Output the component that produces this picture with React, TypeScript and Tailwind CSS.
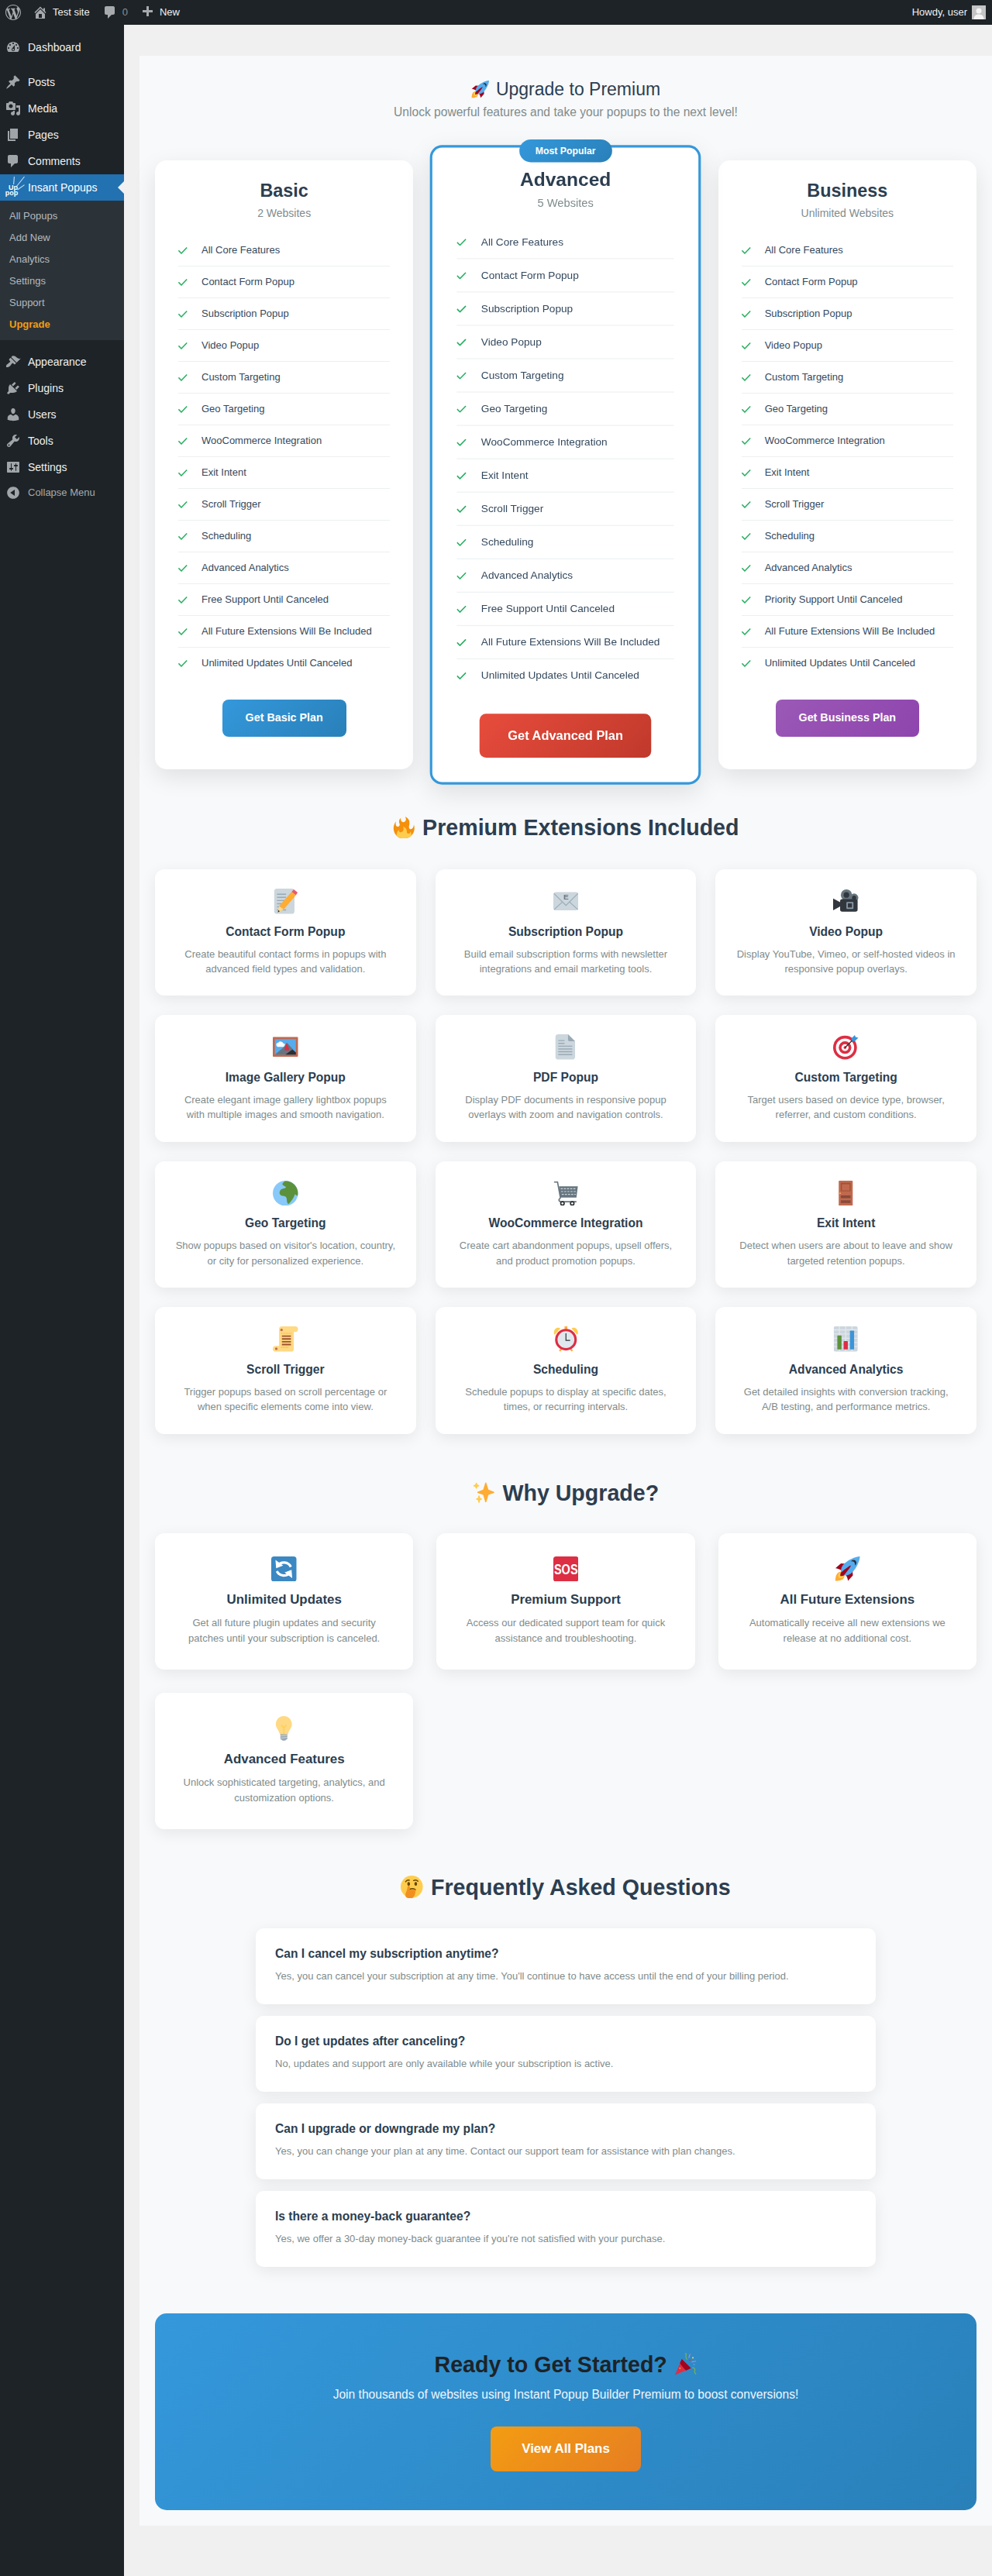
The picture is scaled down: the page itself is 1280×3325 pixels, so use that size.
import React from 'react';

type IconProps = { className?: string };

const Dash = ({ d, className }: { d: string; className?: string }) => (
  <svg viewBox="0 0 20 20" className={className} fill="currentColor">
    <path fillRule="evenodd" d={d} />
  </svg>
);

const wpLogo = 'M20 10c0-5.51-4.49-10-10-10C4.48 0 0 4.49 0 10c0 5.52 4.48 10 10 10 5.51 0 10-4.48 10-10zM7.78 15.37L4.37 6.22c.55-.02 1.17-.08 1.17-.08.5-.06.44-1.13-.06-1.11 0 0-1.45.11-2.37.11-.18 0-.37 0-.58-.01C4.12 2.69 6.87 1.11 10 1.11c2.33 0 4.45.87 6.05 2.34-.68-.11-1.65.39-1.65 1.58 0 .74.45 1.36.9 2.1.35.61.55 1.36.55 2.46 0 1.49-1.4 5-1.4 5l-3.03-8.37c.54-.02.82-.17.82-.17.5-.05.44-1.25-.06-1.22 0 0-1.44.12-2.38.12-.87 0-2.33-.12-2.33-.12-.5-.03-.56 1.2-.06 1.22l.92.08 1.26 3.41zM17.41 10c.24-.64.74-1.87.43-4.25.7 1.29 1.05 2.71 1.05 4.25 0 3.29-1.73 6.24-4.4 7.78.97-2.59 1.94-5.2 2.92-7.78zM6.1 18.09C3.12 16.65 1.11 13.53 1.11 10c0-1.3.23-2.48.72-3.59C3.25 10.3 4.67 14.2 6.1 18.09zm4.03-6.63l2.58 6.98c-.86.29-1.76.45-2.71.45-.79 0-1.57-.11-2.29-.33.81-2.38 1.62-4.74 2.42-7.1z';
const homeIcon = 'M16 8.5l1.53 1.53-1.06 1.06L10 4.62l-6.47 6.47-1.06-1.06L10 2.5l4 4v-2h2v4zm-6-2.46l6 5.99V18H4v-5.97zM12 17v-5H8v5h4z';
const commentIcon = 'M5 2h9c1.1 0 2 .9 2 2v7c0 1.1-.9 2-2 2h-2l-5 5v-5H5c-1.1 0-2-.9-2-2V4c0-1.1.9-2 2-2z';
const plusIcon = 'M17 7v3h-5v5H9v-5H4V7h5V2h3v5h5z';

const menuTop = [
  { label: 'Dashboard', d: 'M3.76 16h12.48c1.1-1.37 1.76-3.11 1.76-5 0-4.42-3.58-8-8-8s-8 3.58-8 8c0 1.89.66 3.63 1.76 5zM10 4c.55 0 1 .45 1 1s-.45 1-1 1-1-.45-1-1 .45-1 1-1zM6 6c.55 0 1 .45 1 1s-.45 1-1 1-1-.45-1-1 .45-1 1-1zm8 0c.55 0 1 .45 1 1s-.45 1-1 1-1-.45-1-1 .45-1 1-1zm-5.37 5.55L12 7v6c0 1.1-.9 2-2 2s-2-.9-2-2c0-.57.24-1.08.63-1.45zM4 10c.55 0 1 .45 1 1s-.45 1-1 1-1-.45-1-1 .45-1 1-1zm12 0c.55 0 1 .45 1 1s-.45 1-1 1-1-.45-1-1 .45-1 1-1zm-5 3c0-.55-.45-1-1-1s-1 .45-1 1 .45 1 1 1 1-.45 1-1z' },
];
const menuMid = [
  { label: 'Posts', d: 'M10.44 3.02l1.82-1.82 6.36 6.35-1.83 1.82c-1.05-.68-2.48-.57-3.41.36l-.75.75c-.92.93-1.04 2.35-.35 3.41l-1.83 1.82-2.41-2.41-2.8 2.79c-.42.42-3.38 2.71-3.8 2.29s1.86-3.39 2.28-3.81l2.79-2.79L4.1 9.36l1.83-1.82c1.05.69 2.48.57 3.4-.36l.75-.75c.93-.92 1.05-2.35.36-3.41z' },
  { label: 'Media', d: 'M13 11V4c0-.55-.45-1-1-1h-1.67L9 1H5L3.67 3H2c-.55 0-1 .45-1 1v7c0 .55.45 1 1 1h10c.55 0 1-.45 1-1zM7 4.5c1.38 0 2.5 1.12 2.5 2.5S8.38 9.5 7 9.5 4.5 8.38 4.5 7 5.62 4.5 7 4.5zM14 6h5v10.5c0 1.38-1.12 2.5-2.5 2.5S14 17.88 14 16.5s1.12-2.5 2.5-2.5c.17 0 .34.02.5.05V9h-3V6zm-4 8.05V13h2v3.5c0 1.38-1.12 2.5-2.5 2.5S7 17.88 7 16.5 8.12 14 9.5 14c.17 0 .34.02.5.05z' },
  { label: 'Pages', d: 'M6 15V2h10v13H6zm-1 1h8v2H3V5h2v11z' },
  { label: 'Comments', d: commentIcon },
];
const menuBottom = [
  { label: 'Appearance', d: 'M14.48 11.06L7.41 3.99l1.5-1.5c.5-.56 2.3-.47 3.51.32 1.21.8 1.43 1.28 2.91 2.1 1.18.64 2.45 1.26 4.45.85zm-.71.71L6.7 4.7 4.93 6.47c-.39.39-.39 1.02 0 1.41l1.06 1.06c.39.39.39 1.03 0 1.42-.6.6-1.43 1.11-2.21 1.69-.35.26-.7.53-1.01.84C1.43 13.23.5 15.38 1.1 16.9c1.52.6 3.67-.33 5.01-1.67.31-.31.58-.66.84-1.01.58-.78 1.09-1.61 1.69-2.21.39-.39 1.02-.39 1.41 0l1.06 1.06c.39.39 1.03.39 1.42 0z' },
  { label: 'Plugins', d: 'M13.11 4.36L9.87 7.6 8 5.73l3.24-3.24c.35-.34 1.05-.2 1.56.32.52.51.66 1.21.31 1.55zm-8 1.77l.91-1.12 9.01 9.01-1.19.84c-.71.71-2.63 1.16-3.82 1.16H6.14L4.9 17.26c-.59.59-1.54.59-2.12 0-.59-.58-.59-1.53 0-2.12l1.24-1.24v-3.88c0-1.13.4-3.19 1.09-3.89zm7.26 3.97l3.24-3.24c.34-.35 1.04-.21 1.55.31.52.51.66 1.21.31 1.55l-3.24 3.25z' },
  { label: 'Users', d: 'M10 9.25c-2.27 0-2.73-3.44-2.73-3.44C7 4.02 7.82 2 9.97 2c2.16 0 2.98 2.02 2.71 3.81 0 0-.41 3.44-2.68 3.44zm0 2.57L12.72 10c2.39 0 4.52 2.33 4.52 4.53v2.49s-3.65 1.13-7.24 1.13c-3.65 0-7.24-1.13-7.24-1.13v-2.49c0-2.25 1.94-4.48 4.47-4.48z' },
  { label: 'Tools', d: 'M16.68 9.77c-1.34 1.34-3.3 1.67-4.95.99l-5.41 6.52c-.99.99-2.59.99-3.58 0s-.99-2.59 0-3.57l6.52-5.42c-.68-1.65-.35-3.61.99-4.95 1.28-1.28 3.12-1.62 4.72-1.06l-2.89 2.89 2.82 2.82 2.86-2.87c.53 1.58.18 3.39-1.08 4.65zM3.81 16.21c.4.39 1.04.39 1.43 0 .4-.4.4-1.04 0-1.43-.39-.4-1.03-.4-1.43 0-.39.39-.39 1.03 0 1.43z' },
  { label: 'Settings', d: 'M18 16V4c0-.55-.45-1-1-1H3c-.55 0-1 .45-1 1v12c0 .55.45 1 1 1h14c.55 0 1-.45 1-1zM8 11h1c.55 0 1 .45 1 1s-.45 1-1 1H8v1.5c0 .28-.22.5-.5.5s-.5-.22-.5-.5V13H6c-.55 0-1-.45-1-1s.45-1 1-1h1V5.5c0-.28.22-.5.5-.5s.5.22.5.5V11zm5-2h-1c-.55 0-1-.45-1-1s.45-1 1-1h1V5.5c0-.28.22-.5.5-.5s.5.22.5.5V7h1c.55 0 1 .45 1 1s-.45 1-1 1h-1v5.5c0 .28-.22.5-.5.5s-.5-.22-.5-.5V9z' },
];
const collapseIcon = 'M10 2.16c4.33 0 7.84 3.51 7.84 7.84s-3.51 7.84-7.84 7.84S2.16 14.33 2.16 10 5.71 2.16 10 2.16zm2 11.72V6.12L6.18 9.97z';

// emoji, drawn on a 36 unit box
const Svg36 = ({ className, children }: IconProps & { children: React.ReactNode }) => (
  <svg viewBox="0 0 36 36" className={className}>{children}</svg>
);

const Rocket = ({ className }: IconProps) => (
  <Svg36 className={className}>
    <path fill="#A0041E" d="M1 17l8-7 16 1 1 16-7 8s.001-5.999-6-12-12-6-12-6z" />
    <path fill="#FFAC33" d="M.973 35s-.036-7.979 2.985-11S15 21.187 15 21.187 14.999 29 11.999 32c-3 3-11.026 3-11.026 3z" />
    <circle fill="#FFCC4D" cx="8.999" cy="27" r="4" />
    <path fill="#55ACEE" d="M35.999 0s-10 0-22 10c-6 5-6 14-4 16s11 2 16-4c10-12 10-22 10-22z" />
    <path fill="#292F33" d="M26.999 5c-1.623 0-3.013.971-3.641 2.36.502-.227 1.055-.36 1.641-.36 2.209 0 4 1.791 4 4 0 .586-.133 1.139-.359 1.64 1.389-.627 2.359-2.017 2.359-3.64 0-2.209-1.791-4-4-4z" />
    <path fill="#A0041E" d="M8 28s0-4 1-5 13.001-10.999 14-10-9.001 13-10.001 14S8 28 8 28z" />
  </Svg36>
);
const Fire = ({ className }: IconProps) => (
  <Svg36 className={className}>
    <path fill="#F4900C" d="M35 19c0-2.062-.367-4.039-1.04-5.868-.46 5.389-3.333 8.157-6.335 6.868-2.812-1.208-.917-5.917-.777-8.164.236-3.809-.012-8.169-6.931-11.794 2.875 5.5.333 8.917-2.333 9.125-2.958.231-5.667-2.542-4.667-7.042-3.238 2.386-3.332 6.402-2.333 9 1.042 2.708-.042 4.958-2.583 5.208-2.84.28-4.418-3.041-2.963-8.333C2.52 10.965 1 14.805 1 19c0 9.389 7.611 17 17 17s17-7.611 17-17z" />
    <path fill="#FFCC4D" d="M28.394 23.999c.148 3.084-2.561 4.293-4.019 3.709-2.106-.843-1.541-2.291-2.083-5.291s-2.625-5.083-5.708-6c2.25 6.333-1.247 8.667-3.08 9.084-1.872.426-3.753-.001-3.968-4.007C7.352 23.668 6 26.676 6 30c0 .368.023.73.06 1.088C9.11 33.809 13.62 36 18 36s8.89-2.191 11.94-4.912c.037-.358.06-.72.06-1.088 0-2.125-.6-4.143-1.606-6.001z" />
  </Svg36>
);
const Sparkles = ({ className }: IconProps) => (
  <Svg36 className={className}>
    <path fill="#FFAC33" d="M34.347 16.893l-8.899-3.294-3.323-10.891c-.128-.42-.517-.708-.956-.708-.439 0-.828.288-.956.708l-3.322 10.891-8.9 3.294c-.393.146-.653.519-.653.938 0 .418.26.793.653.938l8.895 3.293 3.324 11.223c.126.424.516.715.959.715.442 0 .833-.291.959-.716l3.324-11.223 8.896-3.293c.391-.144.652-.518.652-.937 0-.418-.261-.792-.653-.938z" />
    <path fill="#FFCC4D" d="M14.347 27.894l-2.314-.856-.9-3.3c-.118-.436-.513-.738-.964-.738-.451 0-.846.302-.965.737l-.9 3.3-2.313.856c-.393.145-.653.52-.653.938 0 .418.26.793.653.938l2.301.853.907 3.622c.112.444.511.756.97.756.459 0 .858-.312.97-.757l.907-3.622 2.301-.853c.393-.144.653-.519.653-.937 0-.418-.26-.793-.653-.938zM10.009 6.231l-2.364-.875-.876-2.365c-.145-.393-.519-.653-.938-.653-.418 0-.792.26-.938.653l-.875 2.365-2.365.875c-.393.146-.653.52-.653.938 0 .418.26.793.653.938l2.365.875.875 2.365c.146.393.52.653.938.653.418 0 .793-.26.938-.653l.875-2.365 2.365-.875c.393-.146.653-.52.653-.938 0-.418-.26-.793-.653-.938z" />
  </Svg36>
);
const Thinking = ({ className }: IconProps) => (
  <Svg36 className={className}>
    <circle fill="#FFCC4D" cx="18" cy="18" r="18" />
    <path fill="none" stroke="#664500" strokeWidth="1.8" strokeLinecap="round" d="M8 10c1.5-2.5 4-3.2 6-2.4M21 8c3-1.3 5.5-.6 7 1" />
    <ellipse fill="#664500" cx="13" cy="13.5" rx="2.2" ry="3" />
    <ellipse fill="#664500" cx="24.5" cy="13.5" rx="2.2" ry="3" />
    <path fill="none" stroke="#664500" strokeWidth="1.8" strokeLinecap="round" d="M14 22.5c3-1.6 7-1.6 10 .3" />
    <path fill="#F19020" d="M11 36c-2.6-.3-3.8-3-3.2-6.2.6-3 2.6-6 3-9.8.2-1.8.8-3.5 2.2-3.5 1.6 0 2 1.6 1.9 3.3l-.2 3.2 7.5-.6c1.6 0 2.2 1 2.2 2s-.5 1.5-1.3 1.8c.8.5 1 1.2.9 2-.1.8-.6 1.4-1.3 1.6.4.6.5 1.2.3 1.9-.3.8-.9 1.2-1.6 1.3.1 1.4-.9 2.9-3 3.4-2.4.6-4.6.8-7.4.6z" />
  </Svg36>
);
const Memo = ({ className }: IconProps) => (
  <Svg36 className={className}>
    <path fill="#CCD6DD" d="M31 32a4 4 0 0 1-4 4H6a4 4 0 0 1-4-4V4a4 4 0 0 1 4-4h21a4 4 0 0 1 4 4z" />
    <path fill="none" stroke="#99AAB5" strokeWidth="1.6" d="M6 8h13M6 12.5h13M6 17h13M6 21.5h8M6 26h6M6 30.5h13" />
    <path fill="#FFAC33" d="M27 4.5l6 5L15.5 30l-6.5-5z" />
    <path fill="#EA596E" d="M27 4.5L30 1l5.5 4.5-2.5 4z" />
    <path fill="#FFD983" d="M9 25l6.5 5L7 34z" />
    <path fill="#292F33" d="M8 30.7l2 1.7L7 34z" />
  </Svg36>
);
const Email = ({ className }: IconProps) => (
  <Svg36 className={className}>
    <path fill="#CCD6DD" d="M36 27a4 4 0 0 1-4 4H4a4 4 0 0 1-4-4V9a4 4 0 0 1 4-4h28a4 4 0 0 1 4 4z" />
    <path fill="none" stroke="#99AAB5" strokeWidth="1.2" d="M1 7l17 17L35 7M1 30l12-11M35 30L23 19" />
    <text x="18" y="16" textAnchor="middle" fontSize="11" fontWeight="700" fill="#66757F" fontFamily="Liberation Sans, sans-serif">E</text>
  </Svg36>
);
const Camera = ({ className }: IconProps) => (
  <Svg36 className={className}>
    <circle fill="#66757F" cx="19" cy="9" r="8" />
    <circle fill="#31373D" cx="19" cy="9" r="4" />
    <circle fill="#66757F" cx="30" cy="13" r="6" />
    <circle fill="#31373D" cx="30" cy="13" r="3" />
    <rect fill="#31373D" x="10" y="15" width="25" height="18" rx="3" />
    <path fill="#31373D" d="M11 20L0 14v17l11-6z" />
    <rect fill="#8899A6" x="19" y="19" width="10" height="10" rx="1" />
    <rect fill="#31373D" x="21" y="21" width="6" height="6" />
  </Svg36>
);
const Picture = ({ className }: IconProps) => (
  <Svg36 className={className}>
    <rect fill="#C1694F" x="0" y="4" width="36" height="28" rx="1" />
    <rect fill="#55ACEE" x="3" y="7" width="30" height="22" />
    <path fill="#FFF" d="M5 15a3 3 0 0 1 3-3 4 4 0 0 1 7 1 2.5 2.5 0 0 1 0 5H7a3 3 0 0 1-2-3z" />
    <path fill="#66757F" d="M3 29l12-10 5-7 13 14v3z" />
    <path fill="#DD2E44" d="M17 20l3-7 3 7v3h-6z" />
    <path fill="#292F33" d="M18 29l10-7 5 4v3z" />
  </Svg36>
);
const PageDoc = ({ className }: IconProps) => (
  <Svg36 className={className}>
    <path fill="#CCD6DD" d="M7 0h14l10 10v22a4 4 0 0 1-4 4H7a4 4 0 0 1-4-4V4a4 4 0 0 1 4-4z" />
    <path fill="#99AAB5" d="M21 0l10 10h-8a2 2 0 0 1-2-2z" />
    <path fill="none" stroke="#99AAB5" strokeWidth="1.6" d="M7 9h9M7 13h9M7 17h20M7 21h20M7 25h20M7 29h20" />
  </Svg36>
);
const Target = ({ className }: IconProps) => (
  <Svg36 className={className}>
    <circle fill="#DD2E44" cx="17" cy="19" r="17" />
    <circle fill="#FFF" cx="17" cy="19" r="13" />
    <circle fill="#DD2E44" cx="17" cy="19" r="9" />
    <circle fill="#FFF" cx="17" cy="19" r="5" />
    <circle fill="#DD2E44" cx="17" cy="19" r="2" />
    <path stroke="#292F33" strokeWidth="1.5" d="M17 19L30 6" />
    <path fill="#3B94D9" d="M26 6l5-5 1 3 4 1-5 5-4-.5z" />
  </Svg36>
);
const Globe = ({ className }: IconProps) => (
  <Svg36 className={className}>
    <circle fill="#88C9F9" cx="18" cy="18" r="18" />
    <path fill="#5C913B" d="M18 .5C25 0 31 4 34 10c2 4 2.3 8 1.5 12l-4-2.5c-1 4.5-5 10-8.500 13.500-2 .5-3-3-3-6 0-4-2-5-6-5.500-4-.5-5.500-4-3.500-7.500 2-3 6-2 8.500-4.500-1-2-4.500-2-5.500-4.500 1-2 2-3.500 4-4.500z" />
  </Svg36>
);
const Cart = ({ className }: IconProps) => (
  <Svg36 className={className}>
    <path fill="none" stroke="#66757F" strokeWidth="1.8" d="M1 2h5l4 22c.3 1.5-2 2-2 3.500S9 30 11 30h22" />
    <path fill="#66757F" d="M8 8h27l-2 16H10z" />
    <path fill="none" stroke="#CCD6DD" strokeWidth="1.2" strokeDasharray="3 1.5" d="M10.5 11.5h22M11 15.5h21M12 19.5h20" />
    <circle fill="none" stroke="#292F33" strokeWidth="1.8" cx="13" cy="32.5" r="2.5" />
    <circle fill="none" stroke="#292F33" strokeWidth="1.8" cx="27" cy="32.5" r="2.5" />
  </Svg36>
);
const Door = ({ className }: IconProps) => (
  <Svg36 className={className}>
    <rect fill="#C1694F" x="8" y="0" width="20" height="36" rx="1" />
    <rect fill="#A0522D" x="11" y="3" width="14" height="12" />
    <rect fill="#C1694F" x="12.5" y="5" width="11" height="9" />
    <rect fill="#8A4B38" x="11" y="21" width="14" height="4" />
    <rect fill="#8A4B38" x="11" y="28" width="14" height="4" />
    <circle fill="#FFAC33" cx="10" cy="18" r="1.2" />
  </Svg36>
);
const Scroll = ({ className }: IconProps) => (
  <Svg36 className={className}>
    <path fill="#FFD983" d="M9 4a4 4 0 0 1 4-4h19a4 4 0 0 1 4 4 4 4 0 0 1-4 4h-2v24a4 4 0 0 1-4 4H4a4 4 0 0 1-4-4 4 4 0 0 1 4-4h5z" />
    <path fill="none" stroke="#A0522D" strokeWidth="2" d="M13 14h13M13 18h13M13 22h13M13 26h13" />
    <path fill="none" stroke="#FFAC33" strokeWidth="1.2" strokeDasharray="1.2 1" d="M12 10h15M12 30h10" />
    <circle fill="#C1694F" cx="12.5" cy="5" r="1.8" />
    <circle fill="#C1694F" cx="5" cy="32" r="1.8" />
  </Svg36>
);
const Clock = ({ className }: IconProps) => (
  <Svg36 className={className}>
    <path fill="#FFAC33" d="M8 35l3-5 2 2-3 4zM28 35l-3-5-2 2 3 4z" />
    <path fill="#FFCC4D" d="M1 11C0 5 4 1 8 2l2 1-8 9zM35 11c1-6-3-10-7-9l-2 1 8 9z" />
    <rect fill="#FFAC33" x="16" y="0" width="4" height="4" />
    <circle fill="#DD2E44" cx="18" cy="19" r="15.5" />
    <circle fill="#E1E8ED" cx="18" cy="19" r="12" />
    <path fill="none" stroke="#292F33" strokeWidth="1.3" d="M18 10v10h6" />
  </Svg36>
);
const Chart = ({ className }: IconProps) => (
  <Svg36 className={className}>
    <rect fill="#CCD6DD" x="1" y="0" width="34" height="36" rx="2" />
    <path fill="none" stroke="#E1E8ED" strokeWidth="1.5" d="M1 5h34M1 11h34M1 17h34M1 23h34M1 29h34M9 0v36M18 0v36M27 0v36" />
    <rect fill="#5C913B" x="6" y="13" width="6" height="20" rx="1" />
    <rect fill="#DD2E44" x="15" y="21" width="6" height="12" rx="1" />
    <rect fill="#3B94D9" x="24" y="6" width="6" height="27" rx="1" />
  </Svg36>
);
const Arrows = ({ className }: IconProps) => (
  <Svg36 className={className}>
    <rect fill="#3B88C3" x="0" y="0" width="36" height="36" rx="4" />
    <path fill="none" stroke="#FFF" strokeWidth="3.5" d="M9 13.5a11 11 0 0 1 19 1.5M27 22.5A11 11 0 0 1 8 21" />
    <path fill="#FFF" d="M6 5l1 12 10-4zM30 31l-1-12-10 4z" />
  </Svg36>
);
const Sos = ({ className }: IconProps) => (
  <Svg36 className={className}>
    <rect fill="#DD2E44" x="0" y="0" width="36" height="36" rx="4" />
    <text x="18" y="25.5" textAnchor="middle" fontSize="20" fontWeight="700" fill="#FFF" textLength="34" lengthAdjust="spacingAndGlyphs" fontFamily="Liberation Sans, sans-serif">SOS</text>
  </Svg36>
);
const Bulb = ({ className }: IconProps) => (
  <Svg36 className={className}>
    <path fill="#FFD983" d="M29.5 11.7C29.5 17.5 25 20 24 25.5c-.5 2.5-11.5 2.5-12 0C11 20 6.5 17.5 6.5 11.7 6.5 5.2 11.700 0 18 0s11.5 5.2 11.5 11.7z" />
    <path fill="none" stroke="#FFCC4D" strokeWidth="1.3" d="M18 26v-9l-3.5-4M18 17l3.5-4" />
    <path fill="#99AAB5" d="M13 26h10v6.5c0 1-1.5 1.5-2 1.5-.5 1.5-5.5 1.5-6 0-.5 0-2-.5-2-1.5z" />
    <path fill="none" stroke="#CCD6DD" strokeWidth="1.2" d="M13 28.5l10-1M13 31.5l10-1" />
  </Svg36>
);
const Party = ({ className }: IconProps) => (
  <Svg36 className={className}>
    <path fill="#DD2E44" d="M0 36L11 10l15 15z" />
    <path fill="#A0041E" d="M11 10l15 15-8 3.5c-4-3-8-8-10-12z" />
    <path fill="none" stroke="#77B255" strokeWidth="1.5" d="M20 11c-2-2-3-5-2-8 1-2-1-2-2-2M28 24c3 0 5 2 4 5s1 4 2 6" />
    <path fill="none" stroke="#AA8DD8" strokeWidth="1.5" d="M22 8c2-2 1-5 3-6M27 15c3-2 5 0 7-2" />
    <circle fill="#FFCC4D" cx="29" cy="8" r="1.3" />
    <circle fill="#DD2E44" cx="24" cy="12" r="1.1" />
    <circle fill="#55ACEE" cx="31" cy="19" r="1.1" />
    <circle fill="#FFCC4D" cx="8" cy="25" r="1" />
  </Svg36>
);

const PopupLogo = () => (
  <svg viewBox="0 0 28 34" className="w-[28px] h-[34px] shrink-0 -ml-[1px]">
    <path stroke="#c9dff0" strokeWidth="1.1" fill="none" d="M11.6 13l.8-10M15 16L25.5 3M16.5 20l9-6.4" />
    <text x="11" y="20" textAnchor="middle" fontSize="9" fontWeight="700" fill="#fff" fontFamily="Liberation Sans, sans-serif">Up</text>
    <text x="9" y="26.5" textAnchor="middle" fontSize="9" fontWeight="700" fill="#fff" fontFamily="Liberation Sans, sans-serif">pop</text>
  </svg>
);

const SideItem = ({ label, d }: { label: string; d: string }) => (
  <div className="h-[34px] flex items-center pl-[7px]">
    <Dash d={d} className="size-5 text-[#a0a5aa] shrink-0" />
    <span className="ml-[9px] text-[14px] text-[#f0f0f1]">{label}</span>
  </div>
);

const Sidebar = () => (
  <aside className="w-40 shrink-0 bg-[#1d2327] pt-3">
    {menuTop.map((m) => <SideItem key={m.label} {...m} />)}
    <div className="h-[11px]" />
    {menuMid.map((m) => <SideItem key={m.label} {...m} />)}
    <div className="relative h-[34px] flex items-center pl-[7px] bg-[#2271b1] overflow-hidden">
      <PopupLogo />
      <span className="ml-[2px] text-[14px] text-white">Insant Popups</span>
      <div className="absolute right-0 top-[9px] border-y-[8px] border-r-[8px] border-y-transparent border-r-[#f0f0f1]" />
    </div>
    <div className="bg-[#2c3338] py-[6px] text-[13px] text-[#b4b9be]">
      {['All Popups', 'Add New', 'Analytics', 'Settings', 'Support'].map((s) => (
        <div key={s} className="h-[28px] leading-[28px] pl-3">{s}</div>
      ))}
      <div className="h-[28px] leading-[28px] pl-3 font-bold text-[#f39c12]">Upgrade</div>
    </div>
    <div className="h-[11px]" />
    {menuBottom.map((m) => <SideItem key={m.label} {...m} />)}
    <div className="h-[32px] flex items-center pl-[7px]">
      <Dash d={collapseIcon} className="size-5 text-[#a0a5aa] shrink-0" />
      <span className="ml-[9px] text-[13px] text-[#a7aaad]">Collapse Menu</span>
    </div>
  </aside>
);

const TopBar = () => (
  <header className="h-8 bg-[#1d2327] flex items-center pl-[7px] pr-2 text-[13px] text-[#f0f0f1]">
    <Dash d={wpLogo} className="size-5 text-[#a7aaad]" />
    <Dash d={homeIcon} className="size-5 ml-[15px] text-[#a7aaad]" />
    <span className="ml-[6px]">Test site</span>
    <Dash d={commentIcon} className="size-5 ml-[16px] text-[#a7aaad]" />
    <span className="ml-[6px] text-[#8c8f94]">0</span>
    <Dash d={plusIcon} className="size-5 ml-[15px] text-[#a7aaad]" />
    <span className="ml-[6px]">New</span>
    <span className="ml-auto">Howdy, user</span>
    <svg viewBox="0 0 18 18" className="size-[18px] ml-[6px]">
      <rect width="18" height="18" fill="#c4c4c4" />
      <circle cx="9" cy="7" r="3.5" fill="#f4f4f4" />
      <path d="M2.5 18c0-4.5 3-6.5 6.5-6.5s6.5 2 6.5 6.5z" fill="#f4f4f4" />
    </svg>
  </header>
);

const coreFeatures = [
  'All Core Features', 'Contact Form Popup', 'Subscription Popup', 'Video Popup', 'Custom Targeting',
  'Geo Targeting', 'WooCommerce Integration', 'Exit Intent', 'Scroll Trigger', 'Scheduling', 'Advanced Analytics',
];
const tailFeatures = ['All Future Extensions Will Be Included', 'Unlimited Updates Until Canceled'];

const FeatureList = ({ support }: { support: string }) => {
  const rows = [...coreFeatures, support, ...tailFeatures];
  return (
    <ul className="mt-[19px]">
      {rows.map((f, i) => (
        <li key={f} className={i < rows.length - 1 ? 'h-[41px] border-b border-[#ecf0f1] flex items-center text-[13px] text-[#34495e]' : 'h-[40px] flex items-center text-[13px] text-[#34495e]'}>
          <span className="w-[30px] shrink-0">
            <svg viewBox="0 0 12 9" className="w-[12px] h-[9px]" fill="none" stroke="#27ae60" strokeWidth="1.5">
              <path d="M.4 4.4L4 8l7.2-7.400" />
            </svg>
          </span>
          {f}
        </li>
      ))}
    </ul>
  );
};

const PlanHead = ({ name, sites }: { name: string; sites: string }) => (
  <>
    <h3 className="text-center text-[23.4px] leading-[30px] font-bold text-[#2c3e50]">{name}</h3>
    <p className="mt-[5px] text-center text-[14px] leading-[18px] text-[#7f8c8d]">{sites}</p>
  </>
);

const Plans = () => (
  <div className="mt-[52px] grid grid-cols-3 gap-[30px]">
    <div className="bg-white rounded-[15px] shadow-[0_10px_30px_rgba(0,0,0,0.1)] px-[30px] pt-[24px]">
      <PlanHead name="Basic" sites="2 Websites" />
      <FeatureList support="Free Support Until Canceled" />
      <div className="mt-[27px] flex justify-center">
        <button className="h-[48px] px-[30px] rounded-[8px] text-[14.3px] font-bold text-white bg-linear-[135deg,#3498db,#2980b9]">Get Basic Plan</button>
      </div>
    </div>
    <div className="relative z-10 scale-[1.05] bg-white rounded-[15px] border-[3px] border-[#3498db] shadow-[0_10px_30px_rgba(0,0,0,0.1)] px-[30px] pt-[24px] pb-[30px]">
      <div className="absolute -top-[10px] left-1/2 -translate-x-1/2 rounded-[20px] px-[20px] h-[28px] leading-[28px] whitespace-nowrap text-[11.7px] font-bold text-white bg-linear-[135deg,#3498db,#2980b9]">Most Popular</div>
      <PlanHead name="Advanced" sites="5 Websites" />
      <FeatureList support="Free Support Until Canceled" />
      <div className="mt-[27px] flex justify-center">
        <button className="h-[54px] px-[35px] rounded-[8px] text-[15.6px] font-bold text-white bg-linear-[135deg,#e74c3c,#c0392b]">Get Advanced Plan</button>
      </div>
    </div>
    <div className="bg-white rounded-[15px] shadow-[0_10px_30px_rgba(0,0,0,0.1)] px-[30px] pt-[24px]">
      <PlanHead name="Business" sites="Unlimited Websites" />
      <FeatureList support="Priority Support Until Canceled" />
      <div className="mt-[27px] flex justify-center">
        <button className="h-[48px] px-[30px] rounded-[8px] text-[14.3px] font-bold text-white bg-linear-[135deg,#9b59b6,#8e44ad]">Get Business Plan</button>
      </div>
    </div>
  </div>
);

const extensions = [
  { icon: Memo, title: 'Contact Form Popup', text: 'Create beautiful contact forms in popups with advanced field types and validation.' },
  { icon: Email, title: 'Subscription Popup', text: 'Build email subscription forms with newsletter integrations and email marketing tools.' },
  { icon: Camera, title: 'Video Popup', text: 'Display YouTube, Vimeo, or self-hosted videos in responsive popup overlays.' },
  { icon: Picture, title: 'Image Gallery Popup', text: 'Create elegant image gallery lightbox popups with multiple images and smooth navigation.' },
  { icon: PageDoc, title: 'PDF Popup', text: 'Display PDF documents in responsive popup overlays with zoom and navigation controls.' },
  { icon: Target, title: 'Custom Targeting', text: 'Target users based on device type, browser, referrer, and custom conditions.' },
  { icon: Globe, title: 'Geo Targeting', text: "Show popups based on visitor's location, country, or city for personalized experience." },
  { icon: Cart, title: 'WooCommerce Integration', text: 'Create cart abandonment popups, upsell offers, and product promotion popups.' },
  { icon: Door, title: 'Exit Intent', text: 'Detect when users are about to leave and show targeted retention popups.' },
  { icon: Scroll, title: 'Scroll Trigger', text: 'Trigger popups based on scroll percentage or when specific elements come into view.' },
  { icon: Clock, title: 'Scheduling', text: 'Schedule popups to display at specific dates, times, or recurring intervals.' },
  { icon: Chart, title: 'Advanced Analytics', text: 'Get detailed insights with conversion tracking, A/B testing, and performance metrics.' },
];

const reasons = [
  { icon: Arrows, title: 'Unlimited Updates', text: 'Get all future plugin updates and security patches until your subscription is canceled.' },
  { icon: Sos, title: 'Premium Support', text: 'Access our dedicated support team for quick assistance and troubleshooting.' },
  { icon: Rocket, title: 'All Future Extensions', text: 'Automatically receive all new extensions we release at no additional cost.' },
  { icon: Bulb, title: 'Advanced Features', text: 'Unlock sophisticated targeting, analytics, and customization options.' },
];

const faqs = [
  { q: 'Can I cancel my subscription anytime?', a: "Yes, you can cancel your subscription at any time. You'll continue to have access until the end of your billing period." },
  { q: 'Do I get updates after canceling?', a: 'No, updates and support are only available while your subscription is active.' },
  { q: 'Can I upgrade or downgrade my plan?', a: 'Yes, you can change your plan at any time. Contact our support team for assistance with plan changes.' },
  { q: 'Is there a money-back guarantee?', a: "Yes, we offer a 30-day money-back guarantee if you're not satisfied with your purchase." },
];

const SectionTitle = ({ icon: Icon, title, className }: { icon: React.FC<IconProps>; title: string; className: string }) => (
  <h2 className={`${className} flex items-center justify-center gap-[10px] text-[28.6px] leading-[36px] font-bold text-[#2c3e50]`}>
    <Icon className="size-[28.6px]" />
    {title}
  </h2>
);

export default function App() {
  return (
    <div className="h-[3325px] flex flex-col bg-[#f0f0f1] font-['Liberation_Sans',Arial,sans-serif] overflow-hidden">
      <TopBar />
      <div className="flex flex-1">
        <Sidebar />
        <div className="flex-1 min-w-0 pl-5 pt-10">
          <main className="bg-[#f8f9fa] px-5 pt-[28px] pb-[20px]">
            <h1 className="flex items-center justify-center gap-[9px] text-[23px] leading-[30px] text-[#2c3e50]">
              <Rocket className="size-[23px]" />
              Upgrade to Premium
            </h1>
            <p className="mt-[5px] text-center text-[15.6px] leading-[20px] text-[#7f8c8d]">Unlock powerful features and take your popups to the next level!</p>

            <Plans />

            <SectionTitle icon={Fire} title="Premium Extensions Included" className="mt-[57px]" />
            <div className="mt-[36px] grid grid-cols-3 gap-[25px]">
              {extensions.map((e) => (
                <div key={e.title} className="bg-white rounded-[12px] shadow-[0_5px_20px_rgba(0,0,0,0.08)] px-[25px] pt-[25px] pb-[24.9px] text-center">
                  <e.icon className="size-[32.5px] mx-auto" />
                  <h4 className="mt-[13px] text-[15.6px] leading-[20px] font-bold text-[#2c3e50]">{e.title}</h4>
                  <p className="mt-[9px] text-[13px] leading-[19.5px] text-[#7f8c8d]">{e.text}</p>
                </div>
              ))}
            </div>

            <SectionTitle icon={Sparkles} title="Why Upgrade?" className="mt-[58px]" />
            <div className="mt-[34px] grid grid-cols-3 gap-[30px]">
              {reasons.map((r) => (
                <div key={r.title} className="bg-white rounded-[12px] shadow-[0_5px_20px_rgba(0,0,0,0.08)] p-[30px] text-center">
                  <r.icon className="size-[32.5px] mx-auto" />
                  <h4 className="mt-[12.5px] text-[16.9px] leading-[22px] font-bold text-[#2c3e50]">{r.title}</h4>
                  <p className="mt-[9px] text-[13px] leading-[20px] text-[#7f8c8d]">{r.text}</p>
                </div>
              ))}
            </div>

            <SectionTitle icon={Thinking} title="Frequently Asked Questions" className="mt-[57px]" />
            <div className="mt-[35px] w-[800px] mx-auto flex flex-col gap-[15px]">
              {faqs.map((f) => (
                <div key={f.q} className="bg-white rounded-[10px] shadow-[0_5px_20px_rgba(0,0,0,0.08)] px-[25px] pt-[24px] pb-[26px]">
                  <h4 className="text-[15.6px] leading-[18px] font-bold text-[#2c3e50]">{f.q}</h4>
                  <p className="mt-[10px] text-[13px] leading-[20px] text-[#7f8c8d]">{f.a}</p>
                </div>
              ))}
            </div>

            <section className="mt-[60px] rounded-[15px] bg-linear-[135deg,#3498db,#2980b9] pt-[48px] pb-[50px] text-center">
              <h2 className="flex items-center justify-center gap-[10px] text-[28.6px] leading-[36px] font-bold text-[#1d2327]">
                Ready to Get Started?
                <Party className="size-[28.6px]" />
              </h2>
              <p className="mt-[11px] text-[15.6px] leading-[20px] text-[#f0f6fc]">Join thousands of websites using Instant Popup Builder Premium to boost conversions!</p>
              <button className="mt-[31px] h-[58px] px-[40px] rounded-[8px] text-[16.9px] font-bold text-white bg-linear-[135deg,#f39c12,#e67e22]">View All Plans</button>
            </section>
          </main>
        </div>
      </div>
    </div>
  );
}
